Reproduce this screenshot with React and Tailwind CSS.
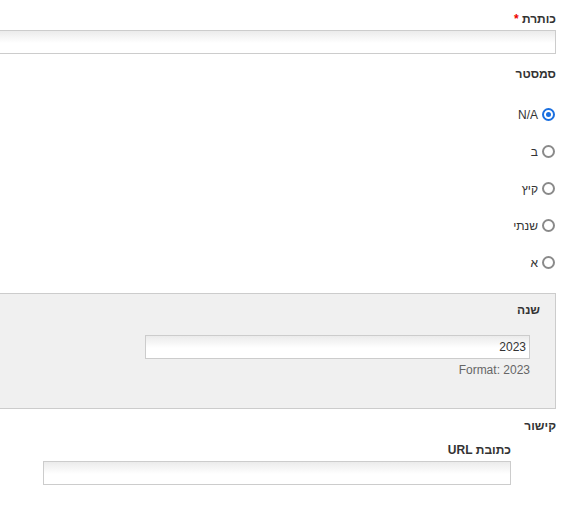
import React from 'react';

const inputCls =
  "block h-[24px] border border-[#ccc] bg-[linear-gradient(to_bottom,#ebebeb,#ffffff_55%)] px-[3px] text-[12px] text-[#333] outline-none";

const semesters = [
  { id: 'na', label: 'N/A', checked: true },
  { id: 'b', label: 'ב' },
  { id: 'summer', label: 'קיץ' },
  { id: 'annual', label: 'שנתי' },
  { id: 'a', label: 'א' },
];

function Radio({ checked }) {
  return checked ? (
    <span className="flex h-[13px] w-[13px] shrink-0 items-center justify-center rounded-full border-2 border-[#1a6fe0] bg-white">
      <span className="h-[5px] w-[5px] rounded-full bg-[#1a6fe0]" />
    </span>
  ) : (
    <span className="h-[13px] w-[13px] shrink-0 rounded-full border-2 border-[#8a8a8a] bg-white" />
  );
}

export default function App() {
  return (
    <div className="w-[568px] h-[507px] overflow-hidden bg-white">
      <div
        dir="rtl"
        className="ml-[-28px] w-[596px] pr-[12px] font-['Liberation_Sans',Arial,sans-serif] text-[12px] leading-[16px] text-[#333]"
      >
        {/* title */}
        <div className="pt-[11px]">
          <label className="block font-bold">
            כותרת <span className="text-[#e00]">*</span>
          </label>
          <input type="text" className={`${inputCls} mt-[3px] w-full`} />
        </div>

        {/* semester */}
        <div className="mt-[12px]">
          <div className="font-bold">סמסטר</div>
          <div className="mt-[14px]">
            {semesters.map((s) => (
              <label key={s.id} className="flex h-[37px] items-center gap-[4px] pr-[1px]">
                <Radio checked={s.checked} />
                <span>{s.label}</span>
              </label>
            ))}
          </div>
        </div>

        {/* year */}
        <div className="mt-[12px] h-[116px] border border-[#ccc] bg-[#f0f0f0] pr-[15px] pt-[8px]">
          <div className="font-bold">שנה</div>
          <div className="mr-[10px] mt-[17px] w-[385px]">
            <input type="text" defaultValue="2023" className={`${inputCls} w-full text-right`} />
            <div className="mt-[3px] text-[#666]">Format: 2023</div>
          </div>
        </div>

        {/* link */}
        <div className="mt-[9px]">
          <div className="font-bold">קישור</div>
          <div className="mr-[45px] mt-[8px] w-[468px]">
            <div className="font-bold">כתובת URL</div>
            <input type="text" className={`${inputCls} mt-[3px] w-full`} />
          </div>
        </div>
      </div>
    </div>
  );
}
